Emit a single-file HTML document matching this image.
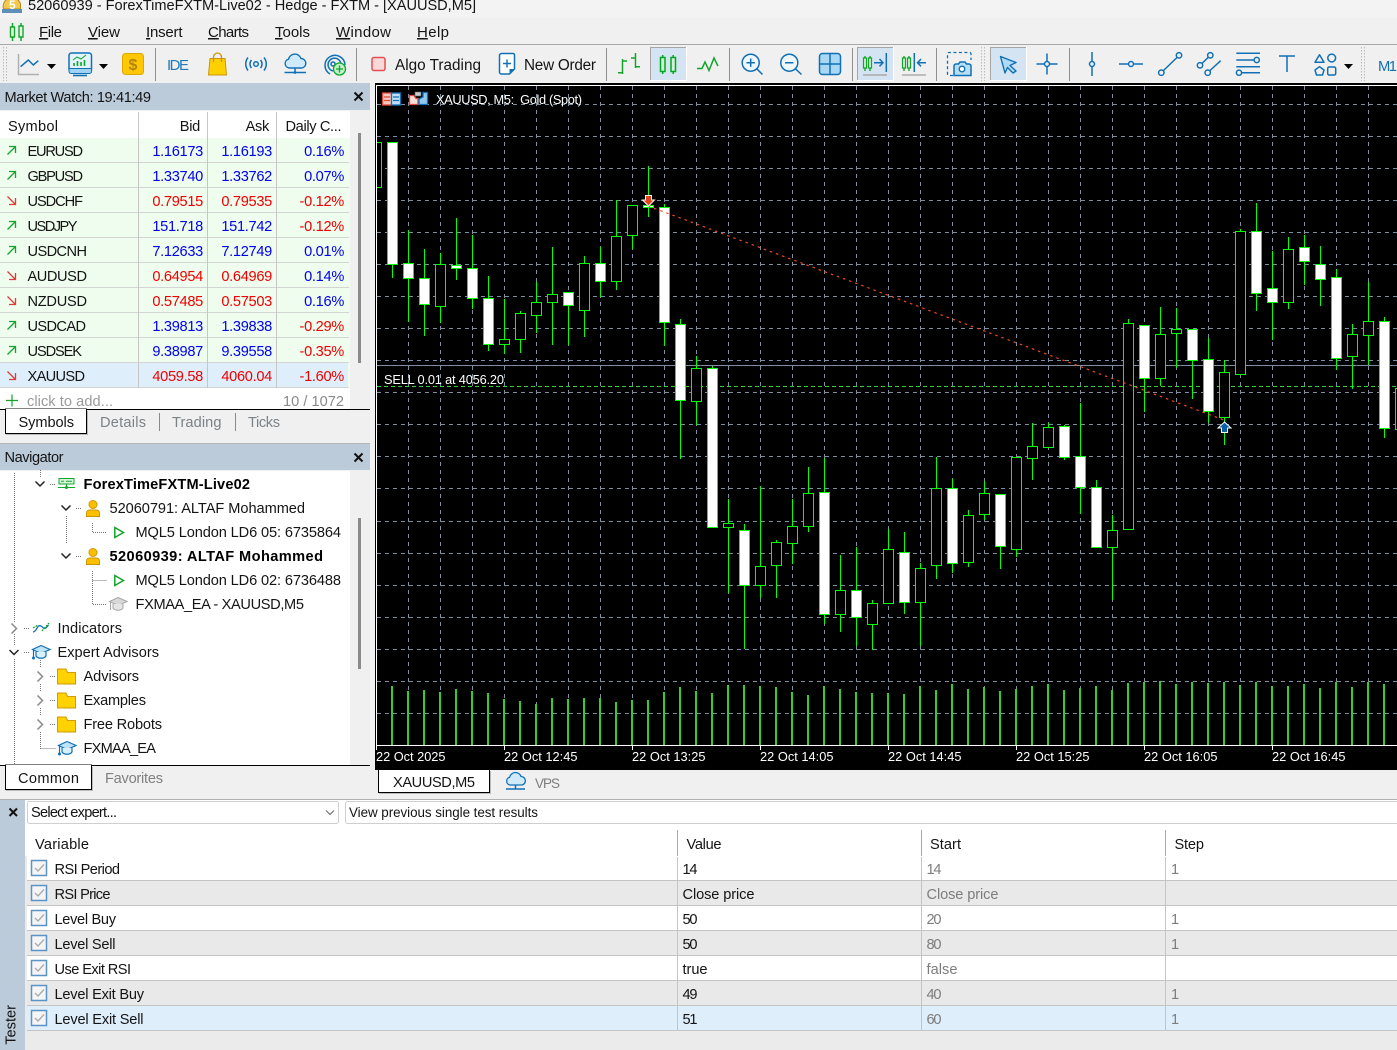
<!DOCTYPE html>
<html><head><meta charset="utf-8"><title>FXTM</title>
<style>
html,body{margin:0;padding:0;background:#f0f0f0;width:1397px;height:1050px;overflow:hidden}
svg{display:block}
text{font-family:"Liberation Sans",sans-serif;font-size:14.6px;fill:#141414;white-space:pre}
.g{fill:#7d7d7d}
.b{font-weight:bold;fill:#000}
.c text{fill:#fff;font-size:12.8px}
.bl{fill:#0000f0}
.r{fill:#f00000}
.e{text-anchor:end;letter-spacing:-.3px}
.m text{font-size:15px}
.tb{font-size:15.3px}
.ic{fill:none;stroke:#1170b5;stroke-width:1.5}
.gr{fill:none;stroke:#12a52a;stroke-width:1.5}
.dot{fill:none;stroke:#777;stroke-width:1;stroke-dasharray:1 1}
</style></head><body>
<svg xmlns="http://www.w3.org/2000/svg" width="1397" height="1050" viewBox="0 0 1397 1050">
<!-- base -->
<rect width="1397" height="1050" fill="#f0f0f0"/>
<rect width="1397" height="18" fill="#f3f3f3"/>
<!-- title -->
<path d="M3.500 9A8.500 8.500 0 1 1 20.500 4V9z" fill="#f2c94c" stroke="#b98a1a"/>
<path d="M2 9h20v4H2z" fill="#5d8fb8"/>
<text x="9" y="9" style="font-size:12px;font-weight:bold;fill:#fff">5</text>
<text x="28" y="10" textLength="448">52060939 - ForexTimeFXTM-Live02 - Hedge - FXTM - [XAUUSD,M5]</text>
<!-- menu -->
<path d="M12.5 23v18M21 23v18" stroke="#12a52a" stroke-width="1.5"/>
<path d="M10.5 27h4v10h-4zM19 26h4v11h-4z" fill="#e8f8e8" stroke="#12a52a" stroke-width="1.4"/>
<g class="m">
<text x="39" y="37" textLength="23"><tspan text-decoration="underline">F</tspan>ile</text>
<text x="88" y="37" textLength="32"><tspan text-decoration="underline">V</tspan>iew</text>
<text x="146" y="37" textLength="36.5"><tspan text-decoration="underline">I</tspan>nsert</text>
<text x="208" y="37" textLength="41"><tspan text-decoration="underline">C</tspan>harts</text>
<text x="275" y="37" textLength="35"><tspan text-decoration="underline">T</tspan>ools</text>
<text x="336" y="37" textLength="55"><tspan text-decoration="underline">W</tspan>indow</text>
<text x="417" y="37" textLength="32"><tspan text-decoration="underline">H</tspan>elp</text>
</g>
<rect y="44" width="1397" height="1" fill="#a8a8a8"/>
<!-- toolbar grips -->
<path d="M3.5 47V81M6.5 47V81M981.5 47V81M984.5 47V81M1361.5 47V81M1364.5 47V81" stroke="#bdbdbd" stroke-dasharray="1.5 1.5"/>
<!-- separators -->
<path d="M155.5 48V81M356.5 48V81M606.5 48V81M729.5 48V81M852.5 48V81M936.5 48V81M1069.5 48V81" stroke="#8f8f8f"/>
<!-- selected buttons -->
<g fill="#d5e4f2">
<rect x="650" y="47" width="37" height="34"/><rect x="857" y="47" width="37" height="34"/><rect x="990" y="47" width="37" height="34"/>
</g>
<path d="M650.5 81V47.5H687M857.5 81V47.5H894M990.5 81V47.5H1027" fill="none" stroke="#a5a5a5"/>
<path d="M686.5 47V80.5H650M893.5 47V80.5H857M1026.5 47V80.5H990" fill="none" stroke="#fff"/>
<!-- line chart -->
<path d="M18.5 54V74.5H39" fill="none" stroke="#b0b0b0" stroke-width="1.5"/>
<path d="M20.6 66.7L28.3 60L33.3 65L38.3 60.7" class="ic"/>
<path d="M47 64h9l-4.5 5zM99 64h9l-4.5 5zM1344 64h9l-4.5 5z" fill="#000"/>
<!-- chart window -->
<rect x="69" y="53" width="22.5" height="19" rx="2.5" fill="#e3f3fd" stroke="#1170b5" stroke-width="1.5"/>
<path d="M73 75.5h14" stroke="#1170b5" stroke-width="1.6"/>
<path d="M69 68.500h22.500v3a2 2 0 0 1-2 2H71a2 2 0 0 1-2-2z" fill="#9fd3f3" stroke="#1170b5"/>
<path d="M74 66v-3M77.500 66v-5M81 66v-4M84.500 66v-6" stroke="#12a52a" stroke-width="1.6"/>
<path d="M73 60l4-3 4 2 5-4" fill="none" stroke="#12a52a"/>
<!-- dollar -->
<rect x="122.500" y="53.500" width="21" height="21" rx="3" fill="#ffc800" stroke="#dca800"/>
<text x="133" y="70" text-anchor="middle" style="font-size:16px;font-weight:bold;fill:#b5830f">$</text>
<!-- IDE -->
<text x="167" y="70" textLength="22" style="font-size:15px;fill:#1f78b8">IDE</text>
<!-- bag -->
<path d="M210 58.500H225L226.500 75H208.500z" fill="#ffd000" stroke="#c8960c"/>
<path d="M213.500 62V57a4 4 0 0 1 8 0V62" fill="none" stroke="#c8960c" stroke-width="1.300"/>
<!-- signal -->
<circle cx="256" cy="64" r="2.300" class="ic"/>
<path d="M251.500 60a6 6 0 0 0 0 8M260.500 60a6 6 0 0 1 0 8M248 57.500a10.500 10.500 0 0 0 0 13M264 57.500a10.500 10.500 0 0 1 0 13" class="ic" stroke-width="1.300"/>
<!-- cloud -->
<path d="M289 68a4.500 4.500 0 0 1-.5-8.800a6.500 6.500 0 0 1 12.500-.7a4.800 4.800 0 0 1 1 9.500z" fill="#cfeafb" stroke="#1170b5" stroke-width="1.4"/>
<path d="M295 68v4.500M284.500 72.500H306" class="ic" stroke-width="1.300"/>
<circle cx="295" cy="72.500" r="1.400" fill="#1170b5"/>
<!-- globe plus -->
<path d="M330 74a10 10 0 1 1 15-9M333 71a6.500 6.500 0 1 1 8-7" class="ic" stroke-width="1.300"/>
<circle cx="333" cy="64" r="2" class="ic" stroke-width="1.200"/>
<circle cx="339.500" cy="69" r="6" fill="#bff0c8" stroke="#12a52a" stroke-width="1.300"/>
<path d="M339.500 65.500v7M336 69h7" stroke="#12a52a" stroke-width="1.300"/>
<!-- algo -->
<rect x="372" y="57.500" width="13" height="13" rx="2" fill="#fbd9d9" stroke="#e05050" stroke-width="1.500"/>
<text x="395" y="70" textLength="86" class="tb">Algo Trading</text>
<!-- new order -->
<path d="M501.500 53.500H513a1.500 1.500 0 0 1 1.500 1.500V69L509.500 74H501.500a2 2 0 0 1-2-2V55.500a2 2 0 0 1 2-2z" fill="#fff" stroke="#1170b5" stroke-width="1.500"/>
<path d="M507 59.500v8M503 63.500h8" stroke="#1170b5" stroke-width="1.400"/>
<path d="M514.500 69h-5v5z" fill="#1170b5"/>
<text x="524" y="70" textLength="72" class="tb">New Order</text>
<!-- bars -->
<path d="M622.500 59V74M618 72.700h4.500M622.500 61H627M635.500 53V68M631 58h4.500M635.500 66.700H640" fill="none" stroke="#12a52a" stroke-width="1.500"/>
<!-- candles selected -->
<path d="M662.700 55v19M673.200 55v19" stroke="#00a820" stroke-width="1.500"/>
<path d="M660.500 57.500h4.500v14h-4.500zM671 57.500h4.500v14H671z" fill="#d5f0da" stroke="#00a820" stroke-width="1.500"/>
<!-- line -->
<path d="M697 68.500H702L705 62L709 70.500L714 58L718 66" class="gr"/>
<!-- zoom in/out -->
<circle cx="750.700" cy="62.700" r="8.500" fill="#eef7fd" stroke="#1170b5" stroke-width="1.500"/>
<path d="M756.700 68.700L762.500 74.500M746.500 62.700h8.400M750.700 58.500v8.400" class="ic"/>
<circle cx="789.300" cy="62.700" r="8.500" fill="#eef7fd" stroke="#1170b5" stroke-width="1.500"/>
<path d="M795.300 68.700L801.500 74.500M785 62.700h8.400" class="ic"/>
<!-- grid icon -->
<rect x="819.500" y="53.500" width="21" height="21" rx="3" fill="#a8d8f5" stroke="#1170b5" stroke-width="1.500"/>
<path d="M830 53.500v21M819.500 64h21" class="ic"/>
<!-- autoscroll -->
<path d="M865 56v15M870 56v15M904 56v15M909 56v15" stroke="#12a52a" stroke-width="1.400"/>
<path d="M863.500 58h3v10h-3zM868.500 58h3v10h-3zM902.500 58h3v10h-3zM907.500 58h3v10h-3z" fill="#d5f0da" stroke="#12a52a" stroke-width="1.200"/>
<path d="M874 62.700H883M879.500 59L883 62.700L879.500 66.400M886.300 53V72M914.300 53V72M917.500 62.700H926M921 59L917.500 62.700L921 66.400" class="ic" stroke-width="1.400"/>
<path d="M863 75h24M902 75h24" stroke="#aaa" stroke-width="1.500"/>
<!-- screenshot -->
<path d="M953 75.500h-4a1.500 1.500 0 0 1-1.500-1.500V54a1.500 1.500 0 0 1 1.500-1.500H969.500a1.500 1.500 0 0 1 1.500 1.500V60" fill="none" stroke="#1170b5" stroke-width="1.300" stroke-dasharray="3 2.500"/>
<path d="M954 75.500V66a2 2 0 0 1 2-2h2.500l1.500-2h5l1.500 2H969a2 2 0 0 1 2 2V75.500z" fill="#b6dff7" stroke="#1170b5" stroke-width="1.500"/>
<circle cx="962" cy="69" r="2.800" fill="#fff" stroke="#1170b5" stroke-width="1.400"/>
<!-- cursor -->
<path d="M1000.500 56.500L1016 62.500L1010 65.500L1016 71L1013 73L1007.500 67.500L1005 73z" fill="#aedcf6" stroke="#1170b5" stroke-width="1.400" stroke-linejoin="round"/>
<!-- crosshair -->
<path d="M1036.500 64H1044.500M1049.500 64H1057.500M1047 53.500V61.500M1047 66.500V74.500" class="ic"/>
<circle cx="1047" cy="64" r="2.500" class="ic"/>
<!-- vertical/horizontal -->
<path d="M1092 52V61.500M1092 66.500V76M1119 64H1128.500M1133.500 64H1143" class="ic"/>
<circle cx="1092" cy="64" r="2.500" class="ic"/><circle cx="1131" cy="64" r="2.500" class="ic"/>
<!-- trend -->
<path d="M1163.500 70.500L1177 57.500" class="ic"/>
<circle cx="1161.300" cy="72.700" r="2.700" class="ic"/><circle cx="1179" cy="55.300" r="2.700" class="ic"/>
<!-- equidistant -->
<path d="M1202 63.500L1208.500 57M1210 70.500L1220.700 60.700" class="ic"/>
<circle cx="1200" cy="65.300" r="2.700" class="ic"/><circle cx="1210.300" cy="55.300" r="2.700" class="ic"/><circle cx="1207.700" cy="72.700" r="2.700" class="ic"/>
<!-- fibo -->
<path d="M1236.300 53.300H1260M1236.300 60H1254M1236.300 66.700H1260M1241.700 72.700H1260" class="ic"/>
<circle cx="1256.700" cy="60" r="2.600" class="ic"/><circle cx="1239" cy="72.700" r="2.600" class="ic"/>
<!-- text -->
<path d="M1279 56H1295M1287 56V72" class="ic"/>
<!-- shapes -->
<path d="M1319.500 54.800L1324 62.300H1315z" class="ic" stroke-linejoin="round"/>
<circle cx="1331.700" cy="58" r="3.900" class="ic"/>
<path d="M1319.500 66.700L1324 70L1322.500 75H1316.500L1315 70z" class="ic" stroke-linejoin="round"/>
<rect x="1327.700" y="67" width="8" height="8" rx="1.500" class="ic"/>
<text x="1378" y="71" textLength="19" style="font-size:14.800px;fill:#1170b5">M1</text>

<!-- CHART -->
<rect x="375" y="83" width="1022" height="687" fill="#000"/>
<path d="M408.500 86V745M440.500 86V745M472.500 86V745M504.500 86V745M536.500 86V745M568.500 86V745M600.500 86V745M632.500 86V745M664.500 86V745M696.500 86V745M728.500 86V745M760.500 86V745M792.500 86V745M824.500 86V745M856.500 86V745M888.500 86V745M920.500 86V745M952.500 86V745M984.500 86V745M1016.500 86V745M1048.500 86V745M1080.500 86V745M1112.500 86V745M1144.500 86V745M1176.500 86V745M1208.500 86V745M1240.500 86V745M1272.500 86V745M1304.500 86V745M1336.500 86V745M1368.500 86V745" stroke="#7f8da0" stroke-dasharray="4 4"/>
<path d="M377 104.500H1397M377 136.500H1397M377 168.500H1397M377 200.500H1397M377 232.500H1397M377 264.500H1397M377 296.500H1397M377 328.500H1397M377 360.500H1397M377 392.500H1397M377 424.500H1397M377 456.500H1397M377 488.500H1397M377 521.500H1397M377 553.500H1397M377 585.500H1397M377 617.500H1397M377 649.500H1397M377 681.500H1397M377 713.500H1397" stroke="#7f8da0" stroke-dasharray="4 4"/>
<!-- volumes -->
<path stroke="#32cd32" stroke-width="2" d="M392 686V745M408 691V745M424 690V745M440 692V745M456 689V745M472 691V745M488 693V745M504 699V745M520 701V745M536 704V745M552 698V745M568 699V745M584 698V745M600 698V745M616 702V745M632 700V745M648 700V745M664 692V745M680 687V745M696 691V745M712 693V745M728 685V745M744 685V745M760 686V745M776 687V745M792 692V745M808 695V745M824 686V745M840 689V745M856 692V745M872 693V745M888 693V745M904 694V745M920 686V745M936 690V745M952 684V745M968 689V745M984 687V745M1000 691V745M1016 689V745M1032 686V745M1048 684V745M1064 690V745M1080 688V745M1096 686V745M1112 690V745M1128 683V745M1144 682V745M1160 681V745M1176 684V745M1192 682V745M1208 683V745M1224 682V745M1240 685V745M1256 682V745M1272 686V745M1288 686V745M1304 684V745M1320 688V745M1336 682V745M1352 687V745M1368 682V745M1384 684V745"/>
<!-- bid + order lines -->
<path d="M377 365.500H1397" stroke="#7f8da0"/>
<path d="M377 386.500H1397" stroke="#32cd32" stroke-dasharray="4 3"/>
<!-- wicks -->
<path stroke="#0f0" fill="none" d="M392.500 264V278M408.500 230V322M424.500 249V336M440.500 253V323M456.500 218V280M472.500 235V309M488.500 276V351M504.500 299V354M520.500 311V353M536.500 282V333M552.500 247V345M568.500 292V345M584.500 256V337M600.500 247V297M616.500 200V290M632.500 205V249M648.500 166V217M664.500 204V346M680.500 319V459M696.500 356V425M712.500 366V527M728.500 499V593M744.500 524V649M760.500 486V598M776.500 540V598M792.500 499V564M808.500 467V532M824.500 458V624M840.500 555V632M856.500 547V646M872.500 600V650M888.500 529V604M904.500 532V614M920.500 563V646M936.500 457V579M952.500 479V573M968.500 510V567M984.500 481V520M1000.500 494V569M1016.500 457V557M1032.500 423V480M1048.500 423V447M1064.500 425V460M1080.500 403V514M1096.500 480V548M1112.500 515V600M1128.500 319V530M1144.500 325V412M1160.500 307V386M1176.500 308V368M1192.500 329V399M1208.500 338V423M1224.500 360V445M1240.500 229V375M1256.500 203V311M1272.500 251V340M1288.500 237V309M1304.500 235V285M1320.500 246V306M1336.500 269V370M1352.500 324V389M1368.500 282V365M1384.500 317V438"/>
<!-- black bodies -->
<path fill="#000" stroke="#0f0" d="M377 142.500h4.500v45H377M435.500 264.500h10v42h-10zM499.500 339.500h10v5h-10zM515.500 313.500h10v26h-10zM531.500 302.500h10v13h-10zM547.500 294.500h10v8h-10zM579.500 263.500h10v47h-10zM611.500 236.500h10v45h-10zM627.500 205.500h10v30h-10zM691.500 368.500h10v33h-10zM723.500 523.500h10v4h-10zM755.500 566.500h10v19h-10zM771.500 542.500h10v23h-10zM787.500 526.500h10v17h-10zM803.500 493.500h10v33h-10zM835.500 590.500h10v24h-10zM867.500 603.500h10v21h-10zM883.500 549.500h10v54h-10zM915.500 568.500h10v34h-10zM931.500 488.500h10v77h-10zM963.500 515.500h10v47h-10zM979.500 493.500h10v21h-10zM1011.500 457.500h10v92h-10zM1027.500 446.500h10v12h-10zM1043.500 427.500h10v20h-10zM1107.500 530.500h10v17h-10zM1123.500 323.500h10v206h-10zM1155.500 334.500h10v44h-10zM1171.500 329.500h10v4h-10zM1219.500 372.500h10v45h-10zM1235.500 231.500h10v143h-10zM1283.500 249.500h10v53h-10zM1347.500 334.500h10v22h-10zM1363.500 321.500h10v14h-10zM1397 388.500h-1.500v41h1.500"/>
<!-- white bodies -->
<path fill="#fff" stroke="#0f0" d="M387.500 142.500h10v122h-10zM403.500 263.500h10v15h-10zM419.500 278.500h10v26h-10zM451.500 265.500h10v3h-10zM467.500 268.500h10v30h-10zM483.500 298.500h10v46h-10zM563.500 292.500h10v13h-10zM595.500 263.500h10v18h-10zM643.500 205.500h10v2h-10zM659.500 207.500h10v115h-10zM675.500 324.500h10v76h-10zM707.500 368.500h10v159h-10zM739.500 530.500h10v55h-10zM819.500 492.500h10v122h-10zM851.500 590.500h10v27h-10zM899.500 552.500h10v50h-10zM947.500 488.500h10v75h-10zM995.500 494.500h10v52h-10zM1059.500 426.500h10v31h-10zM1075.500 456.500h10v31h-10zM1091.500 487.500h10v60h-10zM1139.500 325.500h10v53h-10zM1187.500 329.500h10v31h-10zM1203.500 359.500h10v52h-10zM1251.500 231.500h10v62h-10zM1267.500 288.500h10v14h-10zM1299.500 247.500h10v14h-10zM1315.500 264.500h10v15h-10zM1331.500 277.500h10v81h-10zM1379.500 321.500h10v107h-10z"/>
<!-- trade line -->
<path d="M648 206L1224 420" stroke="#ee4a22" stroke-width="1.200" stroke-dasharray="2.500 4" fill="none"/>
<!-- arrows -->
<path d="M645.500 195.500H651.500V200H654.500L648.500 206L642.500 200H645.500z" fill="#e2431c" stroke="#fff"/>
<path d="M1224.500 422L1231 428H1227.500V432.500H1221.500V428H1218z" fill="#0b5ea8" stroke="#fff"/>
<!-- frame -->
<path d="M376.500 85V745.500H1397M376 85.500H1397" fill="none" stroke="#fff"/>
<path d="M376.500 745V750M504.500 745V750M632.500 745V750M760.500 745V750M888.500 745V750M1016.500 745V750M1144.500 745V750M1272.500 745V750" stroke="#fff"/>
<!-- chart header icons -->
<rect x="382.500" y="93" width="9" height="12" fill="#f7c7c0" stroke="#e0473a" stroke-width="1.300"/>
<rect x="391.500" y="93" width="9" height="12" fill="#bfe0f7" stroke="#1170b5" stroke-width="1.300"/>
<path d="M384 97h6M384 100.500h6" stroke="#e0473a" stroke-width="1.200"/>
<path d="M393 97h6M393 100.500h6" stroke="#1170b5" stroke-width="1.200"/>
<path d="M409.500 95.500H414L416 98.500H418V104.500H409.500z" fill="#fbdcd6" stroke="#e0473a" stroke-width="1.300"/>
<path d="M419 104.500V99L423 97V92.500H427.500V104.500z" fill="#8fc9ef" stroke="#1170b5" stroke-width="1.300"/>
<rect x="415" y="92" width="6" height="4" fill="#ccc" stroke="#666" stroke-width=".6"/>
<g class="c">
<text x="436" y="104" textLength="146">XAUUSD, M5:&#160;&#160;Gold (Spot)</text>
<text x="384" y="384" textLength="120">SELL 0.01 at 4056.20</text>
<text x="376" y="761" textLength="69.500">22 Oct 2025</text>
<text x="504" y="761" textLength="73.500">22 Oct 12:45</text>
<text x="632" y="761" textLength="73.500">22 Oct 13:25</text>
<text x="760" y="761" textLength="73.500">22 Oct 14:05</text>
<text x="888" y="761" textLength="73.500">22 Oct 14:45</text>
<text x="1016" y="761" textLength="73.500">22 Oct 15:25</text>
<text x="1144" y="761" textLength="73.500">22 Oct 16:05</text>
<text x="1272" y="761" textLength="73.500">22 Oct 16:45</text>
</g>
<!-- chart tabs -->
<rect x="378.500" y="769.500" width="111" height="23" fill="#fff" stroke="#000"/>
<path d="M379 793.500H491M490.500 771V794" stroke="#bbb"/>
<text x="393" y="787" textLength="82">XAUUSD,M5</text>
<path d="M510 785a4 4 0 0 1-.4-7.800a6 6 0 0 1 11.500-.7a4.300 4.300 0 0 1 .9 8.500z" fill="#cfeafb" stroke="#1170b5" stroke-width="1.300"/>
<path d="M515.500 785v4M506 789H525" class="ic" stroke-width="1.200"/>
<text x="535" y="788" textLength="25" class="g" style="font-size:13.500px">VPS</text>

<!-- MARKET WATCH -->
<rect y="83" width="370" height="27" fill="#bccbda"/>
<text x="4.500" y="102" textLength="146.500">Market Watch: 19:41:49</text>
<path d="M354.500 92.500l8 8M362.500 92.500l-8 8" stroke="#111" stroke-width="2"/>
<rect y="111" width="350" height="298" fill="#fff"/>
<rect y="138" width="350" height="250" fill="#eefdee"/>
<rect y="363" width="348" height="25" fill="#dfeefb"/>
<path d="M0 162.500H349M0 187.500H349M0 212.500H349M0 237.500H349M0 262.500H349M0 287.500H349M0 312.500H349M0 337.500H349M0 362.500H349M0 387.500H349" stroke="#d4d4d4"/>
<path d="M138.500 112V388M207.500 112V388M276.500 112V388" stroke="#c6c6c6"/>
<rect x="358" y="133" width="3" height="230" fill="#8a8a8a"/>
<text x="8" y="131" textLength="50">Symbol</text>
<text x="200" y="131" class="e">Bid</text>
<text x="269" y="131" class="e">Ask</text>
<text x="285.500" y="131" textLength="56">Daily C...</text>
<g>
<text x="27.500" y="156" textLength="55.500">EURUSD</text><text x="203" y="156" class="e bl">1.16173</text><text x="272" y="156" class="e bl">1.16193</text><text x="344" y="156" class="e bl">0.16%</text>
<text x="27.500" y="181" textLength="55.500">GBPUSD</text><text x="203" y="181" class="e bl">1.33740</text><text x="272" y="181" class="e bl">1.33762</text><text x="344" y="181" class="e bl">0.07%</text>
<text x="27.500" y="206" textLength="55.500">USDCHF</text><text x="203" y="206" class="e r">0.79515</text><text x="272" y="206" class="e r">0.79535</text><text x="344" y="206" class="e r">-0.12%</text>
<text x="27.500" y="231" textLength="50">USDJPY</text><text x="203" y="231" class="e bl">151.718</text><text x="272" y="231" class="e bl">151.742</text><text x="344" y="231" class="e r">-0.12%</text>
<text x="27.500" y="256" textLength="59.500">USDCNH</text><text x="203" y="256" class="e bl">7.12633</text><text x="272" y="256" class="e bl">7.12749</text><text x="344" y="256" class="e bl">0.01%</text>
<text x="27.500" y="281" textLength="59.500">AUDUSD</text><text x="203" y="281" class="e r">0.64954</text><text x="272" y="281" class="e r">0.64969</text><text x="344" y="281" class="e bl">0.14%</text>
<text x="27.500" y="306" textLength="59.500">NZDUSD</text><text x="203" y="306" class="e r">0.57485</text><text x="272" y="306" class="e r">0.57503</text><text x="344" y="306" class="e bl">0.16%</text>
<text x="27.500" y="331" textLength="58.500">USDCAD</text><text x="203" y="331" class="e bl">1.39813</text><text x="272" y="331" class="e bl">1.39838</text><text x="344" y="331" class="e r">-0.29%</text>
<text x="27.500" y="356" textLength="54.500">USDSEK</text><text x="203" y="356" class="e bl">9.38987</text><text x="272" y="356" class="e bl">9.39558</text><text x="344" y="356" class="e r">-0.35%</text>
<text x="27.500" y="381" textLength="57.500">XAUUSD</text><text x="203" y="381" class="e r">4059.58</text><text x="272" y="381" class="e r">4060.04</text><text x="344" y="381" class="e r">-1.60%</text>
</g>
<!-- row arrows -->
<path d="M7.500 154.500L15 147M9 146.500H15.500V153M7.500 179.500L15 172M9 171.500H15.500V178M7.500 229.500L15 222M9 221.500H15.500V228M7.500 254.500L15 247M9 246.500H15.500V253M7.500 329.500L15 322M9 321.500H15.500V328M7.500 354.500L15 347M9 346.500H15.500V353" fill="none" stroke="#12a52a" stroke-width="1.300"/>
<path d="M7.500 196.500L15 204M15.500 198V204.500H9M7.500 271.500L15 279M15.500 273V279.500H9M7.500 296.500L15 304M15.500 298V304.500H9M7.500 371.500L15 379M15.500 373V379.500H9" fill="none" stroke="#e03a3a" stroke-width="1.300"/>
<!-- click to add -->
<path d="M12 394.500V406.500M6 400.500H18" stroke="#12a52a" stroke-width="1.200"/>
<text x="27" y="406" textLength="86" style="fill:#9a9a9a">click to add...</text>
<text x="344" y="406" textLength="61" text-anchor="end" style="fill:#8a8a8a">10 / 1072</text>
<!-- symbol tabs -->
<path d="M0 409.500H370" stroke="#000"/>
<rect x="5.500" y="409" width="81" height="24.500" fill="#fff" stroke="#000"/>
<path d="M6 409H86V410H6z" fill="#fff"/>
<path d="M6 434.500H88M87.500 411V435" stroke="#bbb"/>
<text x="18.500" y="427" textLength="55.500">Symbols</text>
<text x="100" y="427" textLength="46" style="fill:#7b8288">Details</text>
<path d="M159.500 413V431M235.500 413V431" stroke="#8a8a8a"/>
<text x="172" y="427" textLength="49.500" style="fill:#7b8288">Trading</text>
<text x="248" y="427" textLength="32" style="fill:#7b8288">Ticks</text>
<rect y="443" width="370" height="1" fill="#b5b5b5"/>
<!-- NAVIGATOR -->
<rect y="444" width="370" height="26" fill="#bccbda"/>
<text x="4.500" y="462" textLength="59">Navigator</text>
<path d="M354.500 453.500l8 8M362.500 453.500l-8 8" stroke="#111" stroke-width="2"/>
<rect y="471" width="350" height="294" fill="#fff"/>
<rect x="358" y="518" width="3" height="151" fill="#8a8a8a"/>
<!-- tree lines -->
<path class="dot" d="M14.500 473V622M14.500 634V645M14.500 659V765M40.500 470V478M40.500 660V668M40.500 684V692M40.500 708V716M40.500 732V750M40.500 748.500H56M66.500 516V544M92.500 523V532.500H107M92.500 571V604.500H107M92.500 580.500H107M50 484.500H56M76 508.500H82M76 556.500H82M24 628.500H30M24 652.500H30M50 676.500H56M50 700.500H56M50 724.500H56"/>
<!-- chevrons -->
<path d="M35.500 481.500L40 486L44.500 481.500M61.500 505.500L66 510L70.500 505.500M61.500 553.500L66 558L70.500 553.500M9.500 650L14 654.500L18.500 650" fill="none" stroke="#222" stroke-width="1.500"/>
<path d="M11.500 623.500L16.500 628.500L11.500 633.500M37.500 671.500L42.500 676.500L37.500 681.500M37.500 695.500L42.500 700.500L37.500 705.500M37.500 719.500L42.500 724.500L37.500 729.500" fill="none" stroke="#8a8a8a" stroke-width="1.500"/>
<!-- server -->
<rect x="59" y="478.500" width="15" height="5.500" fill="#d9f5dd" stroke="#12a52a"/>
<path d="M58 487.500H75M66.500 484V487.500M61 481.200h3M66 481.200h6" stroke="#12a52a"/>
<circle cx="66.500" cy="487.500" r="1.500" fill="#12a52a"/>
<!-- persons -->
<g fill="#ffc000" stroke="#cf9500" stroke-width="1">
<circle cx="93" cy="504.500" r="4"/><path d="M86.500 516.500V513a3 3 0 0 1 3-3h7a3 3 0 0 1 3 3v3.500z"/>
<circle cx="93" cy="552.500" r="4"/><path d="M86.500 564.500V561a3 3 0 0 1 3-3h7a3 3 0 0 1 3 3v3.500z"/>
</g>
<!-- plays -->
<path d="M114.800 527.500L123.500 532.500L114.800 537.500zM114.800 575.500L123.500 580.500L114.800 585.500z" fill="none" stroke="#12a52a" stroke-width="1.500"/>
<!-- gray cap -->
<path d="M118 597.500L127 601.500L118 605.500L109.500 601.500z" fill="#d8d8d8" stroke="#a5a5a5"/>
<path d="M113 604V608C115 611 121 611 123 608V604" fill="#e5e5e5" stroke="#a5a5a5"/>
<path d="M110.500 602V610" stroke="#a5a5a5"/>
<!-- indicators -->
<path d="M33 632C37 632 37 624 41 626C44 628 44 631 48.500 625" fill="none" stroke="#1170b5" stroke-width="1.300"/>
<path d="M33 628L38 625M42 631L49 623" fill="none" stroke="#12a52a" stroke-width="1.200" stroke-dasharray="2 1"/>
<!-- EA caps -->
<path d="M41 645.500L50 649.500L41 653.500L32.500 649.500z" fill="#bfe4fa" stroke="#1170b5" stroke-width="1.200"/>
<path d="M36 652V656C38 659 44 659 46 656V652" fill="#d8effc" stroke="#1170b5" stroke-width="1.200"/>
<path d="M33.500 650V657" stroke="#1170b5" stroke-width="1.200"/><circle cx="33.500" cy="658" r="1.500" fill="#1170b5"/>
<path d="M67 741.500L76 745.500L67 749.500L58.500 745.500z" fill="#bfe4fa" stroke="#1170b5" stroke-width="1.200"/>
<path d="M62 748V752C64 755 70 755 72 752V748" fill="#d8effc" stroke="#1170b5" stroke-width="1.200"/>
<path d="M59.500 746V753" stroke="#1170b5" stroke-width="1.200"/><circle cx="59.500" cy="754" r="1.500" fill="#1170b5"/>
<!-- folders -->
<path d="M57.500 669H66L67.500 672.500H75.500V684H57.500z" fill="#ffd200" stroke="#d29b00"/>
<path d="M57.500 693H66L67.500 696.500H75.500V708H57.500z" fill="#ffd200" stroke="#d29b00"/>
<path d="M57.500 717H66L67.500 720.500H75.500V732H57.500z" fill="#ffd200" stroke="#d29b00"/>
<!-- tree labels -->
<text x="83.500" y="489" textLength="166.500" class="b">ForexTimeFXTM-Live02</text>
<text x="109.500" y="513" textLength="195.500">52060791: ALTAF Mohammed</text>
<text x="135.500" y="537" textLength="205.500">MQL5 London LD6 05: 6735864</text>
<text x="109.500" y="561" textLength="213.500" class="b">52060939: ALTAF Mohammed</text>
<text x="135.500" y="585" textLength="205.500">MQL5 London LD6 02: 6736488</text>
<text x="135.500" y="609" textLength="168.500">FXMAA_EA - XAUUSD,M5</text>
<text x="57.500" y="633" textLength="64.500">Indicators</text>
<text x="57.500" y="657" textLength="101.500">Expert Advisors</text>
<text x="83.500" y="681" textLength="55.500">Advisors</text>
<text x="83.500" y="705" textLength="62.500">Examples</text>
<text x="83.500" y="729" textLength="78.500">Free Robots</text>
<text x="83.500" y="753" textLength="72.500">FXMAA_EA</text>
<!-- nav tabs -->
<path d="M0 765.500H370" stroke="#000"/>
<rect x="5.500" y="765" width="86" height="24.500" fill="#fff" stroke="#000"/>
<path d="M6 765H91V766H6z" fill="#fff"/>
<path d="M6 790.500H93M92.500 767V791" stroke="#bbb"/>
<text x="18" y="783" textLength="61">Common</text>
<text x="105" y="783" textLength="58" style="fill:#808080">Favorites</text>
<rect y="799" width="1397" height="1" fill="#b0b0b0"/>
<!-- TESTER -->
<rect y="800" width="25" height="250" fill="#bccbda"/>
<rect x="25" y="800" width="1372" height="250" fill="#fff"/>
<path d="M9.500 808.500l7.500 7.500M17 808.500l-7.500 7.500" stroke="#111" stroke-width="2"/>
<rect x="27.500" y="801.500" width="311" height="22" rx="2" fill="#fff" stroke="#cfcfcf"/>
<path d="M1397 801.500H347.500a2 2 0 0 0-2 2V821.500a2 2 0 0 0 2 2H1397" fill="#fff" stroke="#cfcfcf"/>
<text x="31" y="817" textLength="86">Select expert...</text>
<path d="M326 810.500L330 814.500L334 810.500" fill="none" stroke="#666"/>
<text x="349" y="817" textLength="189" style="font-size:13.400px">View previous single test results</text>
<!-- table -->
<path d="M677.500 830V856M921.500 830V856M1165.500 830V856" stroke="#a8a8a8"/>
<text x="35" y="849" textLength="54">Variable</text>
<text x="686.500" y="849" textLength="35">Value</text>
<text x="930" y="849" textLength="31">Start</text>
<text x="1174.500" y="849" textLength="29.500">Step</text>
<rect x="27" y="881" width="1370" height="24" fill="#e9e9e9"/>
<rect x="27" y="931" width="1370" height="24" fill="#e9e9e9"/>
<rect x="27" y="981" width="1370" height="24" fill="#e9e9e9"/>
<rect x="27" y="1006" width="1370" height="24" fill="#dfeefb"/>
<rect x="0" y="1031" width="1397" height="19" fill="#ebebeb"/>
<rect y="1031" width="25" height="19" fill="#bccbda"/>
<rect x="25" y="856" width="2" height="194" fill="#ebebeb"/>
<text transform="translate(15.500,1005) rotate(-90)" text-anchor="end">Tester</text>
<path d="M27 880.500H1397M27 905.500H1397M27 930.500H1397M27 955.500H1397M27 980.500H1397M27 1005.500H1397M27 1030.500H1397" stroke="#c4c4c4"/>
<path d="M677.500 857V1030M921.500 857V1030M1165.500 857V1030" stroke="#c4c4c4"/>
<!-- checks -->
<g fill="#f5f5f5" stroke="#5a93c6" stroke-width="1.500">
<rect x="31.500" y="860.500" width="15" height="15"/><rect x="31.500" y="885.500" width="15" height="15"/><rect x="31.500" y="910.500" width="15" height="15"/><rect x="31.500" y="935.500" width="15" height="15"/><rect x="31.500" y="960.500" width="15" height="15"/><rect x="31.500" y="985.500" width="15" height="15"/><rect x="31.500" y="1010.500" width="15" height="15"/>
</g>
<path d="M35 868l3 3 6-6.500M35 893l3 3 6-6.500M35 918l3 3 6-6.500M35 943l3 3 6-6.500M35 968l3 3 6-6.500M35 993l3 3 6-6.500M35 1018l3 3 6-6.500" fill="none" stroke="#aaa" stroke-width="1.300"/>
<g>
<text x="54.500" y="874" textLength="65.500">RSI Period</text>
<text x="54.500" y="899" textLength="56">RSI Price</text>
<text x="54.500" y="924" textLength="61.500">Level Buy</text>
<text x="54.500" y="949" textLength="61">Level Sell</text>
<text x="54.500" y="974" textLength="76.500">Use Exit RSI</text>
<text x="54.500" y="999" textLength="89.500">Level Exit Buy</text>
<text x="54.500" y="1024" textLength="89">Level Exit Sell</text>
<text x="682.500" y="874" textLength="15">14</text>
<text x="682.500" y="899" textLength="72">Close price</text>
<text x="682.500" y="924" textLength="15">50</text>
<text x="682.500" y="949" textLength="15">50</text>
<text x="682.500" y="974" textLength="25">true</text>
<text x="682.500" y="999" textLength="15">49</text>
<text x="682.500" y="1024" textLength="15">51</text>
<text x="926.500" y="874" textLength="15" class="g">14</text>
<text x="926.500" y="899" textLength="72" class="g">Close price</text>
<text x="926.500" y="924" textLength="15" class="g">20</text>
<text x="926.500" y="949" textLength="15" class="g">80</text>
<text x="926.500" y="974" textLength="31" class="g">false</text>
<text x="926.500" y="999" textLength="15" class="g">40</text>
<text x="926.500" y="1024" textLength="15" class="g">60</text>
<text x="1171" y="874" class="g">1</text>
<text x="1171" y="924" class="g">1</text>
<text x="1171" y="949" class="g">1</text>
<text x="1171" y="999" class="g">1</text>
<text x="1171" y="1024" class="g">1</text>
</g>
</svg>
</body></html>
